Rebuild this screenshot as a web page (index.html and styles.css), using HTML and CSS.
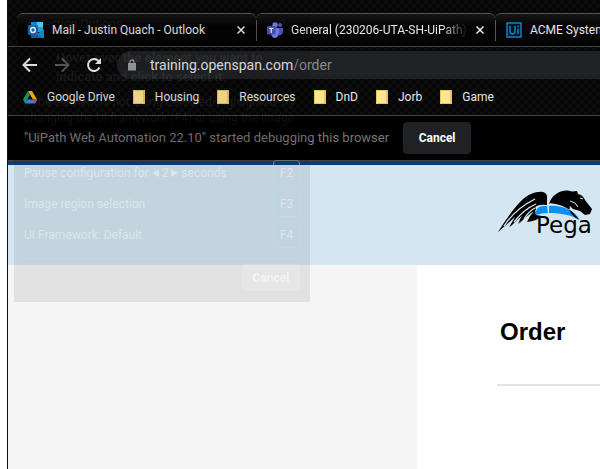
FILE: index.html
```html
<!DOCTYPE html>
<html lang="en">
<head>
<meta charset="utf-8">
<title>Order</title>
<link rel="stylesheet" href="styles.css">
</head>
<body>
<div class="window">
  <div class="chrome">
    <nav class="tabs" aria-label="Tabs">
      <div class="tab">
        <svg class="fav" viewBox="0 0 16 16"><path fill="#1490df" d="M3 0h12v10H3z"/><path fill="#50d9ff" d="M9 0h6v5H9z"/><path fill="#28a8ea" d="M9 5h6v5H9z"/><path fill="#1490df" d="M3 16V9l6 3 7-5v9z"/><path fill="#1068b5" d="M3 9l11 7H3z"/><rect y="3" width="10" height="10" rx="1" fill="#0f6cbd"/><ellipse cx="5" cy="8" rx="2.300" ry="2.500" fill="none" stroke="#fff" stroke-width="1.400"/></svg>
        <a class="title" href="#mail">Mail - Justin Quach - Outlook</a>
        <button class="close" aria-label="Close Mail"><svg viewBox="0 0 8 8"><path d="M.5.5l7 7M7.500.5l-7 7" stroke="#eee" stroke-width="1.500"/></svg></button>
      </div>
      <div class="tab">
        <svg class="fav" viewBox="0 0 16 16"><circle cx="13" cy="3" r="2" fill="#5059c9"/><path d="M10 6h6v4q-1 4-5 3z" fill="#5059c9"/><circle cx="8" cy="3" r="2.700" fill="#7b83eb"/><path d="M4 6h8v5q-1 5-4 5t-4-4z" fill="#7b83eb"/><rect y="4" width="8.500" height="8.500" rx="1" fill="#4b53bc"/><path d="M2 6.500h4.500M4.250 6.500v4.500" stroke="#fff" stroke-width="1.200"/></svg>
        <a class="title fade" href="#general">General (230206-UTA-SH-UiPath)</a>
        <button class="close" aria-label="Close General"><svg viewBox="0 0 8 8"><path d="M.5.5l7 7M7.500.5l-7 7" stroke="#eee" stroke-width="1.500"/></svg></button>
      </div>
      <div class="tab">
        <svg class="fav" viewBox="0 0 16 16"><path d="M1 1h14v14H1z" fill="#06121b" stroke="#0a85c8" stroke-width="1.500"/><path d="M4 4v5q0 3 2.500 3T9 9V4M12 6.500V12M12 3.500V5" fill="none" stroke="#0a85c8" stroke-width="1.500"/></svg>
        <a class="title" href="#acme">ACME System</a>
      </div>
    </nav>
    <div class="toolbar">
      <button class="nav" aria-label="Back"><svg viewBox="0 0 16 16"><path d="M15 8H2M8 1.500L1.500 8 8 14.500" fill="none" stroke="#f1f1f1" stroke-width="2"/></svg></button>
      <button class="nav" aria-label="Forward"><svg viewBox="0 0 16 16"><path d="M1 8h13M8 1.500L14.500 8 8 14.500" fill="none" stroke="#5c5c5c" stroke-width="2"/></svg></button>
      <button class="nav" aria-label="Reload"><svg viewBox="0 0 16 16"><path d="M13.500 10.500A6 6 0 1 1 12.500 4" fill="none" stroke="#f1f1f1" stroke-width="2"/><path d="M15 1v6H9z" fill="#f1f1f1"/></svg></button>
      <div class="address">
        <svg class="lock" viewBox="0 0 8 12"><path d="M0 4h8v7.500H0z" fill="#9aa0a6"/><path d="M2 5V3a2 2 0 0 1 4 0v2" fill="none" stroke="#9aa0a6" stroke-width="1.300"/></svg>
        <span>training.openspan.com<span class="path">/order</span></span>
      </div>
    </div>
    <nav class="bookmarks" aria-label="Bookmarks">
      <a href="#drive"><svg class="drive" viewBox="0 0 14 13"><path d="M5 0h4l5 8.500h-4z" fill="#fbbc04"/><path d="M5 0l2 3.500-5 9L0 8.500z" fill="#1ea362"/><path d="M4.300 8.500H14L12 12.500H2z" fill="#4285f4"/><path d="M10 8.500h4l-2 4z" fill="#ea4335"/></svg>Google Drive</a>
      <a href="#housing"><i class="folder"></i>Housing</a>
      <a href="#resources"><i class="folder"></i>Resources</a>
      <a href="#dnd"><i class="folder"></i>DnD</a>
      <a href="#jorb"><i class="folder"></i>Jorb</a>
      <a href="#game"><i class="folder"></i>Game</a>
    </nav>
    <div class="infobar">
      <span>"UiPath Web Automation 22.10" started debugging this browser</span>
      <button class="cancel">Cancel</button>
    </div>
  </div>
  <header class="banner">
    <svg class="logo" viewBox="0 0 104 50" role="img" aria-label="Pega">
      <path d="M1 43C8 32 16 20 24 12 31 5 40 2 46 3q4 1 4 5v8q-8-1-12 2L27 29 21 35 25 26 13 38 18 28 1 43z"/>
      <path d="M12 38Q20 23 38 13l1 3Q27 24 12 38zM22 35Q28 24 38 17l1 4Q30 26 22 35zM30 33Q33 26 38 21l1 5 6 1q-5 5-15 6z"/>
      <path d="M7 37Q18 20 38 10M17 33Q27 20 39 15M27 30Q32 22 38 19" stroke="#d4e6f1" stroke-width="1.300" fill="none"/>
      <path fill="#0d8ff2" d="M39 26q-1-8 6-9h5l1 7q-6 0-12 2zM52 17c13-1 25 4 31 14-9-5-19-7-31-7z"/>
      <path d="M52 15C54 7 62 1 71 1.500l4 1 5-.5 1 3q5 1 7 6l7 9-2 5-5 1-5-4-7-2-3-3q-3 7 9 14-9-15-30-17z"/>
      <path d="M73 12q6 1 8 6M83 9l3 1" stroke="#d4e6f1" fill="none"/>
      <text x="39" y="44">Pega</text>
    </svg>
  </header>
  <main class="page">
    <aside class="side"></aside>
    <section class="content"><h1>Order</h1><hr></section>
  </main>
  <section class="panel" aria-label="Selection Options">
    <div class="dim">
      <div class="head"><span>Selection Options</span><span>?</span></div>
      <p class="lead">Hover over the element you want to<br>indicate and click to select it.</p>
      <p class="hint">If the element is not being detected/highlighted, try<br>changing the UI framework (F4) or using the Image<br>region selection (F3).</p>
    </div>
    <div class="row"><span>Pause configuration for <svg class="arrow" viewBox="0 0 7 8"><path d="M7 0v8L0 4z"/></svg> 2 <svg class="arrow" viewBox="0 0 7 8"><path d="M0 0v8l7-4z"/></svg> seconds</span><kbd>F2</kbd></div>
    <div class="row"><span>Image region selection</span><kbd>F3</kbd></div>
    <div class="row"><span>UI Framework: Default</span><kbd>F4</kbd></div>
    <div class="foot"><button class="ghost">Cancel</button></div>
  </section>
</div>
</body>
</html>
```
FILE: styles.css
```css
* { box-sizing: border-box; }
body {
  margin: 0;
  padding-left: 7px;
  background: #fff;
  font: 12px/16px Roboto, "Open Sans", sans-serif;
}
button { border: 0; padding: 0; background: none; font: inherit; color: inherit; }
a { color: inherit; text-decoration: none; }
svg { display: block; flex: none; }
.window {
  position: relative;
  display: flex;
  flex-direction: column;
  min-height: 100vh;
  border-left: 1px solid #111;
  overflow: hidden;
}
.chrome {
  color: #e8e8e8;
  background: repeating-conic-gradient(#060606 0 25%, #0c0c0c 0 50%) 0 0 / 8px 8px;
  border-bottom: 4px solid #0a3f7d;
}
.tabs {
  display: flex;
  padding: 13px 0 0 9px;
  height: 47px;
  border-bottom: 1px solid #444;
  overflow: hidden;
}
.tab {
  position: relative;
  flex: none;
  display: flex;
  align-items: center;
  width: 239px;
  padding: 0 11px;
  border-top: 1px solid #555;
  border-radius: 6px 6px 0 0;
  background: linear-gradient(#161616, #040404 12px);
}
.tab + .tab::before {
  content: "";
  position: absolute;
  left: 0;
  top: 6px;
  height: 21px;
  border-left: 1px solid #555;
}
.fav { width: 16px; height: 16px; }
.title {
  flex: 1;
  min-width: 0;
  margin: 0 8px;
  white-space: nowrap;
}
.fade { mask-image: linear-gradient(to right, #000 85%, transparent); }
.close svg { width: 8px; height: 8px; }
.toolbar { display: flex; align-items: center; gap: 16px; padding: 4px 0 0 14px; }
.nav svg { width: 16px; height: 16px; }
.address {
  flex: 1;
  display: flex;
  align-items: center;
  gap: 14px;
  height: 28px;
  margin-left: -1px;
  padding-left: 11px;
  border-radius: 14px 0 0 14px;
  background: #202124;
  font-size: 14px;
}
.lock { width: 8px; height: 12px; }
.path { color: #8a8a8a; }
.bookmarks {
  display: flex;
  align-items: center;
  gap: 18px;
  height: 37px;
  padding-left: 15px;
  border-bottom: 1px solid #444;
}
.bookmarks a { display: flex; align-items: center; gap: 10px; white-space: nowrap; }
.drive { width: 14px; height: 13px; }
.folder {
  width: 12px;
  height: 14px;
  border: 1px solid #e8c659;
  border-right-width: 2px;
  background: #ffe694;
}
.infobar {
  display: flex;
  align-items: center;
  gap: 14px;
  height: 45px;
  padding-left: 16px;
  background: #000;
  border-bottom: 1px solid #444;
  color: #777;
  font-size: 13px;
  white-space: nowrap;
}
.cancel {
  width: 68px;
  height: 32px;
  border-radius: 4px;
  background: #202124;
  color: #fff;
  font-size: 12px;
  font-weight: 700;
}
.banner { height: 100px; padding: 24px 0 0 489px; background: #d4e6f1; }
.logo { width: 104px; height: 50px; }
.logo text { font: 23px "DejaVu Sans", sans-serif; }
.page { flex: 1; display: flex; }
.side { width: 409px; flex: none; background: #f5f5f5; }
.content { flex: 1; padding: 53px 0 0 80px; }
h1 {
  margin: 0 0 38px 3px;
  font: bold 24px/28px "Liberation Sans", Arial, sans-serif;
  color: #000;
}
hr { margin: 0; border: 0; height: 2px; background: #e3e3e3; }
.panel {
  position: absolute;
  left: 6px;
  top: 8px;
  width: 296px;
  padding: 8px 10px 11px;
  background: rgba(0, 0, 0, .08);
  color: rgba(255, 255, 255, .42);
  white-space: nowrap;
}
.dim { height: 144px; color: rgba(255, 255, 255, .08); }
.head { display: flex; justify-content: space-between; padding: 0 14px 0 4px; }
.lead { margin: 16px 0 0 32px; font-size: 13px; line-height: 19px; font-weight: 700; }
.hint { margin: 8px 0 0; }
.row { display: flex; justify-content: space-between; align-items: center; margin-bottom: 5px; }
.row span { display: flex; align-items: center; white-space: pre; }
.arrow { width: 7px; height: 8px; fill: currentColor; }
kbd {
  width: 27px;
  height: 26px;
  border: 1px solid rgba(185, 220, 250, .5);
  border-top-color: rgba(185, 220, 250, .3);
  border-radius: 4px;
  font: inherit;
  line-height: 24px;
  text-align: center;
}
.foot {
  display: flex;
  justify-content: flex-end;
  margin-top: 10px;
  padding-top: 5px;
  border-top: 1px solid rgba(255, 255, 255, .08);
}
.ghost {
  width: 58px;
  height: 27px;
  border-radius: 4px;
  background: rgba(255, 255, 255, .18);
  color: rgba(255, 255, 255, .6);
  font-weight: 600;
}
```
